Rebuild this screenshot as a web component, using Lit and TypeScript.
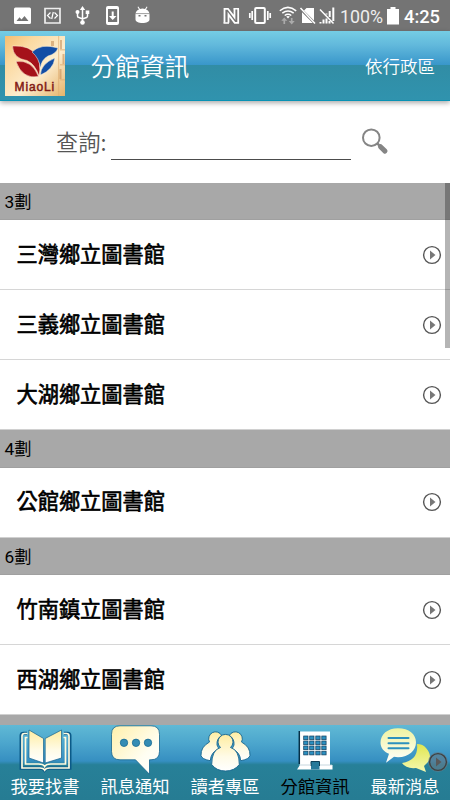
import { LitElement, html, css, svg } from "lit";
import { customElement, property } from "lit/decorators.js";

const statusLeft = svg`
  <g fill="#fff">
    <path fill-rule="evenodd" d="M15.500 7.500h14q1.500 0 1.500 1.500v13.500q0 1.500-1.500 1.500h-14q-1.500 0-1.500-1.500v-13.500q0-1.500 1.500-1.500zM16.500 21h12l-4-5-3 3.500-2-2.200z"/>
    <path d="M45 8.500h15v14.500h-15z" fill="none" stroke="#eee" stroke-width="1.700"/>
    <path d="M50.500 12.500l-3 3 3 3M54.500 12.500l3 3-3 3M53.300 12l-1.600 7" fill="none" stroke="#fff" stroke-width="1.200"/>
    <path d="M82.500 9v13M77.500 12v4q0 1.500 1.500 1.500l3.500 1.500 4-1.500q1-.5 1-1.500v-4" fill="none" stroke="#fff" stroke-width="1.500"/>
    <path d="M82.500 6l2.700 4h-5.400zM85.700 10.500h3.600v3.600h-3.600z"/><circle cx="77.500" cy="12" r="2"/><circle cx="82.500" cy="22.500" r="2.300"/>
    <path fill-rule="evenodd" d="M108 6h9q2 0 2 2v15q0 2-2 2h-9q-2 0-2-2V8q0-2 2-2zM108 9v13h9.200V9z"/>
    <path d="M111.700 11.500h2v4.500h2.800l-3.800 4-3.800-4h2.800z"/>
    <path fill-rule="evenodd" d="M135.500 14.500c0-3 2-4.500 3.500-5l-1.500-2.500.8-.5 1.700 2.400q2.500-.7 5 0l1.700-2.400.8.5-1.500 2.500c1.500.5 3.500 2 3.500 5v5c0 2-3 3.500-7 3.500s-7-1.500-7-3.500zM138.500 15v1.500h2V15zM144.500 15v1.500h2V15z"/>
    <path d="M135.500 13.600h14" stroke="#777" stroke-width=".7"/>
  </g>`;

const statusRight = svg`
  <path d="M224.500 22.800v-14h3.500l6.500 8.500v-8.500M238.200 8.800v14h-3.500l-6.200-8.300v8.300" fill="none" stroke="#fff" stroke-width="1.800"/>
  <path d="M223.500 23h5.500M233.500 8.800h5.500" stroke="#fff" stroke-width="1.500"/>
  <g fill="none" stroke="#fff">
    <rect x="255.200" y="8" width="9.600" height="15" rx="1" stroke-width="2"/>
    <path d="M252.200 11v9M267.800 11v9M249.800 13v5M270.200 13v5" stroke-width="1.700"/>
    <path d="M279.800 10.800q8-6.800 16.400 0M282.300 13.200q5.700-4.600 11.400 0M284.700 15.500q3.300-2.600 6.600 0" stroke-width="1.500"/>
    <path d="M284.300 24v-4.500M291.700 18v4" stroke="#aaa" stroke-width="1.700"/>
  </g>
  <path d="M284.300 17.500l3 3.300h-6zM291.700 24.500l3-3.500h-6z" fill="#aaa"/>
  <path d="M286.200 16.500q1.800-1.200 3.600 0l-1.800 2z" fill="#fff"/>
  <path d="M304 10.500l2.500-2.500h7.500v12.500zM302 12.300l10.800 10.700h-10.800z" fill="#fff"/>
  <path d="M300.500 8l14.500 15.500M320 9.500l13.500 14" stroke="#fff" stroke-width="1.500"/>
  <path d="M320.500 23.500v-1.500M323.500 23.500v-4M326.500 23.500v-5M329.500 23.500v-2.500M326.500 14.500v-1M329.700 17v-6M333.300 21v-13.500" stroke="#fff" stroke-width="2"/>
  <path d="M387 9h3.500v-2h5v2h3.500v15.500h-12z" fill="#fff"/>`;

const gradients = svg`
  <defs>
    <linearGradient id="cream" x1="0" y1="0" x2="1" y2="1"><stop offset="0" stop-color="#fff0aa"/><stop offset=".65" stop-color="#fffef2"/><stop offset="1" stop-color="#fff"/></linearGradient>
    <linearGradient id="warm" x1="0" y1="0" x2="0" y2="1"><stop offset="0" stop-color="#ffeda0"/><stop offset=".6" stop-color="#fffbe6"/><stop offset="1" stop-color="#fff"/></linearGradient>
    <linearGradient id="lime" x1="0" y1="0" x2="0" y2="1"><stop offset="0" stop-color="#e0e650"/><stop offset="1" stop-color="#f5f8b0"/></linearGradient>
    <linearGradient id="pale" x1="0" y1="0" x2="0" y2="1"><stop offset="0" stop-color="#eff3a0"/><stop offset="1" stop-color="#fff"/></linearGradient>
  </defs>`;

const tabIcons: Record<string, unknown> = {
  book: svg`
    <path d="M27 8.300h-3.500q-2.400 0-2.400 2.400v32.500h18.500q3.400 0 4.900 2 1.500-2 4.900-2h20.500v-32.500q0-2.400-2.400-2.400h-3.500" fill="none" stroke="#0b5a88" stroke-width="3.200"/>
    <path d="M27.500 8.500h-3q-2.500 0-2.500 2.500v32h18q3.500 0 4.700 2 1.200-2 4.700-2h19.600v-32q0-2.500-2.500-2.500h-3M27.500 12.500h-2v26.500h13q5 0 6.200 2.500 1.200-2.500 6.200-2.500h14.600v-26.500h-2" fill="none" stroke="#fffbe0" stroke-width="1.700"/>
    <path d="M29 5l14.500 8.500v24.500l-14.500-5zM61.500 5l-16.300 8.500v24.500l16.300-5z" fill="url(#warm)" stroke="#14628c" stroke-width=".7"/>`,
  message: svg`
    <path d="M30 .8h31q8.500 0 8.500 8.500v17q0 8.500-8.500 8.500h-1.500v14.500l-14-14.500h-15.500q-8.500 0-8.500-8.500v-17q0-8.500 8.500-8.500z" fill="url(#cream)" stroke="#16658e" stroke-width=".8"/>
    <g fill="#348cb4" stroke="#176b94" stroke-width=".8"><circle cx="34" cy="17.800" r="3.700"/><circle cx="46" cy="17.800" r="3.700"/><circle cx="58" cy="17.800" r="3.700"/></g>`,
  readers: svg`
    <g fill="url(#warm)" stroke="#16658e" stroke-width=".9">
      <path d="M29.500 17a6.700 6.700 0 1 1 12.200-6.500q-5.200 2.800-4.700 9.500l1.800 3.700q-8 3.500-8.500 12-8.500-1.500-9.300-5.200-.5-8.500 8.500-13.500zM61.500 17a6.700 6.700 0 1 0-12.200-6.500q5.200 2.800 4.700 9.500l-1.800 3.700q8 3.500 8.500 12 8.500-1.500 9.300-5.200.5-8.500-8.500-13.500z"/>
      <path d="M40.500 22.500a7.500 7.500 0 1 1 10 0q8.800 2.500 8.800 17-4.800 6.500-13.800 6.500t-13.800-6.500q0-14.500 8.800-17z"/>
    </g>`,
  building: svg`
    <path d="M30 6.500h30v33.500h2.500v4.500h-35.500l3-4.500z" fill="#fff"/>
    <path d="M29.300 6v33" stroke="#062f46" stroke-width="1.500"/>
    <g fill="#2b8fc0" stroke="#123c59" stroke-width=".7">
      ${[11, 16, 21, 26.200].map(y => [33.700, 39.700, 45.800, 51.800].map(x => svg`<rect x=${x} y=${y} width="4.300" height="3.700"/>`))}
    </g>
    <path d="M41 44.500v-8h8.500v8z" fill="#26799a"/><path d="M41 41v-4.500h8.500v4.500" fill="none" stroke="#0f4058"/>
    <path d="M29 40h12M50 40h12" stroke="#b9cbd5" stroke-width=".8"/>`,
  news: svg`
    <path d="M57 19q6 0 9 4 8 9 0 16l-2 2 2 6-10-4q-10 1-14-5 17-3 15-19z" fill="url(#lime)"/>
    <path d="M38 3.200c11 0 18 6 18 14s-7 15-18 15q-2 0-4-.4l-8 6 3-9c-5-2-8.500-6-8.500-11 0-8.500 7-14.600 17.500-14.600z" fill="url(#pale)"/>
    <path d="M28.500 13h20M28.500 18.200h20M28.500 23.300h20" stroke="#2d91bd" stroke-width="2" stroke-linecap="round"/>`,
};

@customElement("go-arrow")
class GoArrow extends LitElement {
  static styles = css`:host, .arrow { display: block; width: 20px; height: 20px; }`;
  render() {
    return html`<svg class="arrow" viewBox="0 0 20 20">
      <circle cx="10" cy="10" r="8.400" fill="none" stroke="#555" stroke-width="1.400"/>
      <path d="M8 5.500l5.500 4.500-5.500 4.500z" fill="#777"/>
    </svg>`;
  }
}

@customElement("branch-group")
class BranchGroup extends LitElement {
  @property() heading = "";
  @property({ attribute: false }) items: string[] = [];
  static styles = css`
    :host { display: block; flex: none; }
    .heading { height: 37.500px; box-sizing: border-box; padding: 1px 4px 0 4.500px; background: #a8a8a8; border-bottom: 1px solid #a0a0a0;
      font-size: 17.300px; line-height: 36px; }
    .item { height: 70px; box-sizing: border-box; padding: 0 8px 0 16.500px; display: flex; align-items: center; justify-content: space-between;
      border-bottom: 1px solid #d6d6d6; font-size: 21.200px; line-height: 30px; -webkit-text-stroke: .65px #000; }
    .item:last-child { border-bottom-color: #d0d0d0; }
  `;
  render() {
    return html`<div class="heading">${this.heading}</div>
      ${this.items.map(name => html`<div class="item"><span>${name}</span><go-arrow></go-arrow></div>`)}`;
  }
}

@customElement("app-root")
class AppRoot extends LitElement {
  static styles = css`
    :host { display: flex; flex-direction: column; width: 450px; height: 800px; overflow: hidden; background: #fff; color: #000;
      font-family: Roboto, "Noto Sans CJK TC", sans-serif; }
    .status { position: relative; flex: none; height: 31px; box-sizing: border-box; background: #747474; color: #fff;
      display: flex; align-items: center; justify-content: flex-end; padding-right: 10px; padding-top: 1px; }
    .glyphs { position: absolute; left: 0; top: 0; }
    .percent { font-size: 17.800px; margin-right: 21px; color: #eee; }
    .clock { font-weight: 500; font-size: 18.300px; }
    .bar { flex: none; z-index: 1; height: 70px; box-sizing: border-box; display: flex; align-items: center; padding: 0 15px 0 5px; color: #fff;
      border-bottom: 1px solid #0892b4; box-shadow: 0 2px 5px #0005;
      background: linear-gradient(#75cde4 0, #62b9dc 20%, #3896ca 49.500%, #318da5 50%, #3093ae 100%); }
    .logo { width: 60px; height: 60px; margin-top: 1px; }
    .title { flex: 1; margin: 4px 0 0 25.500px; font-size: 24.700px; font-weight: 350; line-height: 36px; }
    .filter { font-size: 17.500px; line-height: 26px; padding-top: 3px; font-weight: 350; }
    .search { flex: none; height: 81.600px; box-sizing: border-box; display: flex; align-items: flex-start; padding: 22px 0 0 56px; }
    .label { width: 55px; font-family: "Noto Sans CJK TC", sans-serif; font-size: 22.300px; font-weight: 350; line-height: 37px; color: #555; white-space: nowrap; }
    .field { width: 240px; height: 36px; border-bottom: 1px solid #4c4c4c; }
    .lens { width: 28px; height: 28px; margin: 5px 0 0 10px; }
    .list { position: relative; flex: 1; min-height: 0; overflow: hidden; display: flex; flex-direction: column; }
    .rest { flex: 1; background: #a8a8a8; }
    .thumb { position: absolute; right: 0; top: 0; width: 5px; height: 165px; background: #0000004a; }
    .tabs { position: relative; flex: none; height: 75px; display: grid; grid-template-columns: repeat(5, 1fr);
      background: linear-gradient(#60b9d5 0, #4ca6cd 24%, #368fc1 48%, #278098 53%, #267c93 100%); }
    .tab { display: flex; flex-direction: column; align-items: center; color: #fff; font-size: 17.300px; line-height: 25px; }
    .tab svg { display: block; width: 90px; height: 50px; flex: none; }
    .tab.active { color: #000; }
    .floating { position: absolute; left: 428px; top: 27px; background: #7ea3b8aa; border-radius: 50%; filter: brightness(.75); }
  `;

  private tabs = [
    ["book", "我要找書"], ["message", "訊息通知"], ["readers", "讀者專區"], ["building", "分館資訊"], ["news", "最新消息"],
  ];
  private groups = [
    { heading: "3劃", items: ["三灣鄉立圖書館", "三義鄉立圖書館", "大湖鄉立圖書館"] },
    { heading: "4劃", items: ["公館鄉立圖書館"] },
    { heading: "6劃", items: ["竹南鎮立圖書館", "西湖鄉立圖書館"] },
  ];

  render() {
    return html`
      <div class="status">
        <svg class="glyphs" width="450" height="31">${statusLeft}${statusRight}</svg>
        <span class="percent">100%</span><span class="clock">4:25</span>
      </div>
      <header class="bar">
        <svg class="logo" viewBox="0 0 60 60">
          <defs><linearGradient id="sand" x1="0" y1="0" x2="1" y2="1"><stop offset="0" stop-color="#f6bd70"/><stop offset=".25" stop-color="#fbd9a0"/><stop offset=".6" stop-color="#fdedce"/><stop offset="1" stop-color="#e6b36a"/></linearGradient></defs>
          <rect width="60" height="60" fill="url(#sand)"/>
          <path d="M53 0h1.200v60h-1.200zM55 13h5v1.500h-5zM55 28h5v1.500h-5zM55 43h5v1.500h-5z" fill="#e0ad72" opacity=".6"/>
          <path d="M55 4h2v9h-2zM57.500 18h2v10h-2zM54.500 33h2v10h-2zM46 5h3v5h-3z" fill="#b5753c" opacity=".45"/>
          <g stroke="#fff3dc" stroke-width=".5">
            <path d="M7.500 10q17-1 24 9 5 8 2.500 21-4-12-12-15.500-14-2-14.500-14.500z" fill="#a5121a"/>
            <path d="M11 25.500q16-2 22.500 15-16 3-22.500-15z" fill="#a5121a"/>
            <path d="M27 16q9-9 26-4-2 6-10 8-7 4-7.500 12-1.500-10-8.500-16z" fill="#124da5"/>
            <path d="M35.500 39q0-11 14.500-17-2 12-14.500 17z" fill="#124da5"/>
          </g>
          <text x="9.600" y="55.300" font-family="Liberation Sans, sans-serif" font-size="12" fill="#821b14" stroke="#821b14" stroke-width=".5" textLength="39.500" lengthAdjust="spacing">MiaoLi</text>
        </svg>
        <h1 class="title">分館資訊</h1>
        <span class="filter">依行政區</span>
      </header>
      <div class="search">
        <span class="label">查詢:</span><div class="field"></div>
        <svg class="lens" viewBox="0 0 28 28">
          <circle cx="10.300" cy="9.700" r="8.300" fill="none" stroke="#858585" stroke-width="2"/>
          <path d="M16 15.200l3 3" stroke="#858585" stroke-width="2.500"/><path d="M19.500 18.700l4.500 4.400" stroke="#858585" stroke-width="5" stroke-linecap="round"/>
        </svg>
      </div>
      <main class="list">
        ${this.groups.map(g => html`<branch-group .heading=${g.heading} .items=${g.items}></branch-group>`)}
        <div class="rest"></div>
        <div class="thumb"></div>
      </main>
      <nav class="tabs">
        ${this.tabs.map(([icon, name]) => html`<div class="tab ${name === "分館資訊" ? "active" : ""}">
          <svg viewBox="0 0 90 50">${gradients}${tabIcons[icon]}</svg><span>${name}</span></div>`)}
        <go-arrow class="floating"></go-arrow>
      </nav>`;
  }
}
